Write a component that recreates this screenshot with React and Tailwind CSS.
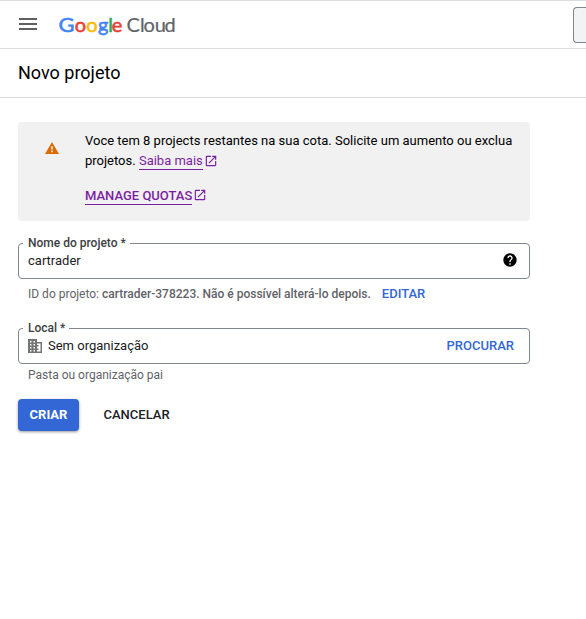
import { MdOpenInNew, MdHelp } from "react-icons/md";

function Logo() {
  return (
    <svg
      width="120"
      height="30"
      viewBox="0 0 120 30"
      className="ml-[22px] shrink-0 font-['Lato',sans-serif] text-[20px]"
      aria-label="Google Cloud"
    >
      <g strokeWidth="0.6">
        <text x="-0.6" y="22" fill="#4285f4" stroke="#4285f4" textLength="16" lengthAdjust="spacingAndGlyphs">G</text>
        <text x="15.8" y="22" fill="#ea4335" stroke="#ea4335">o</text>
        <text x="27.3" y="22" fill="#fbbc04" stroke="#fbbc04">o</text>
        <text x="38.9" y="22" fill="#4285f4" stroke="#4285f4">g</text>
        <text x="49.2" y="22" fill="#34a853" stroke="#34a853">l</text>
        <text x="52.8" y="22" fill="#ea4335" stroke="#ea4335">e</text>
      </g>
      <text x="67.6 81 84.6 95.8 105.5" y="22" fill="#5f6368" stroke="#5f6368" strokeWidth="0.2">Cloud</text>
    </svg>
  );
}

function WarningIcon() {
  return (
    <svg width="14" height="12" viewBox="0 0 14 12" fill="#dd6b00" className="mt-[11px] ml-px shrink-0">
      <path fillRule="evenodd" d="M7 0l7 12H0zM6.2 4.2v3.2h1.6V4.2zM6.2 8.6v1.6h1.6V8.6z" />
    </svg>
  );
}

function OrganizationIcon() {
  return (
    <svg width="14" height="14" viewBox="0 0 14 14" fill="#757575" className="shrink-0">
      <path
        fillRule="evenodd"
        d="M0 0h9v3h5v11H0zM2 2v1.5h1.5V2zM5.5 2v1.5H7V2zM2 5v1.5h1.5V5zM5.5 5v1.5H7V5zM2 8v1.5h1.5V8zM5.5 8v1.5H7V8zM2 11v1.5h1.5V11zM5.5 11v1.5H7V11zM9 4.5v1.5h1.5v1.5H9v2h1.5V11H9v1.5h3.5v-8z"
      />
    </svg>
  );
}

function OutlinedField({ label, children }) {
  return (
    <fieldset className="h-[43px] w-[512px] rounded-[4px] border border-[#80868b] pl-[4px]">
      <legend className="h-[14px] pr-[4px] pl-[5px] text-[12px] leading-[14px] font-medium whitespace-nowrap text-[#3c4043]">
        {label}
      </legend>
      <div className="flex h-[21px] items-center pr-[11px] pl-[5px]">{children}</div>
    </fieldset>
  );
}

export default function App() {
  return (
    <div className="h-[619px] w-[586px] overflow-hidden bg-white font-['Roboto',sans-serif] text-[13px] text-[#202124]">
      <header className="flex h-[49px] items-center border-y border-[#dadce0] pl-[19px]">
        <button className="-mt-px flex w-[18px] shrink-0 flex-col gap-[3px]" aria-label="Menu">
          <span className="h-[2px] w-full bg-[#5f5f5f]" />
          <span className="h-[2px] w-full bg-[#5f5f5f]" />
          <span className="h-[2px] w-full bg-[#5f5f5f]" />
        </button>
        <Logo />
        <div className="ml-auto h-[36px] w-[13px] rounded-l-[4px] border border-r-0 border-[#80868b] bg-[#f1f3f4]" />
      </header>
      <div className="flex h-[49px] items-center border-b border-[#dadce0] pl-[18px]">
        <h1 className="text-[18px] leading-6 text-black">Novo projeto</h1>
      </div>

      <main className="px-[18px] pt-[24px]">
        <section className="flex h-[99px] w-[512px] rounded-[4px] bg-[#f1f1f1] pt-[9px] pl-[26px]">
          <WarningIcon />
          <div className="ml-[26px] whitespace-nowrap">
            <p className="leading-[20px] text-black">
              Voce tem 8 projects restantes na sua cota. Solicite um aumento ou exclua
              <br />
              <span className="flex items-center">
                projetos.&nbsp;
                <a className="h-[18px] border-b border-[#7b1fa2] leading-[18px] text-[#7b1fa2]">Saiba mais</a>
                <MdOpenInNew className="-mt-px ml-px size-[14px] text-[#7b1fa2]" />
              </span>
            </p>
            <p className="mt-[15px] flex h-[20px] items-center font-medium text-[#7b1fa2]">
              <a className="h-[18px] border-b border-[#7b1fa2] leading-[18px]">MANAGE QUOTAS</a>
              <MdOpenInNew className="-mt-[2px] ml-px size-[14px]" />
            </p>
          </div>
        </section>

        <div className="mt-[15px]">
          <OutlinedField label="Nome do projeto *">
            <span>cartrader</span>
            <MdHelp className="-mt-[2px] ml-auto size-[16px] text-black" />
          </OutlinedField>
          <p className="mt-[7px] flex h-[16px] items-center pl-[10px] text-[12px] whitespace-nowrap text-[#5f6368]">
            ID do projeto:&nbsp;
            <span className="font-medium">cartrader-378223. Não é possível alterá-lo depois.</span>
            <a className="ml-[11px] text-[13px] font-medium text-[#3367d6]">EDITAR</a>
          </p>
        </div>

        <div className="mt-[19px]">
          <OutlinedField label="Local *">
            <OrganizationIcon />
            <span className="ml-[6px]">Sem organização</span>
            <button className="mr-[4px] ml-auto font-medium text-[#3367d6]">PROCURAR</button>
          </OutlinedField>
          <p className="mt-[3px] pl-[10px] text-[12px] leading-[16px] text-[#5f6368]">Pasta ou organização pai</p>
        </div>

        <div className="mt-[16px] flex items-center">
          <button className="h-[32px] w-[61px] rounded-[4px] bg-[#3367d6] font-bold text-white shadow-[0_1px_3px_rgba(0,0,0,0.4)]">
            CRIAR
          </button>
          <button className="ml-[24.5px] font-medium text-[#202124]">CANCELAR</button>
        </div>
      </main>
    </div>
  );
}
